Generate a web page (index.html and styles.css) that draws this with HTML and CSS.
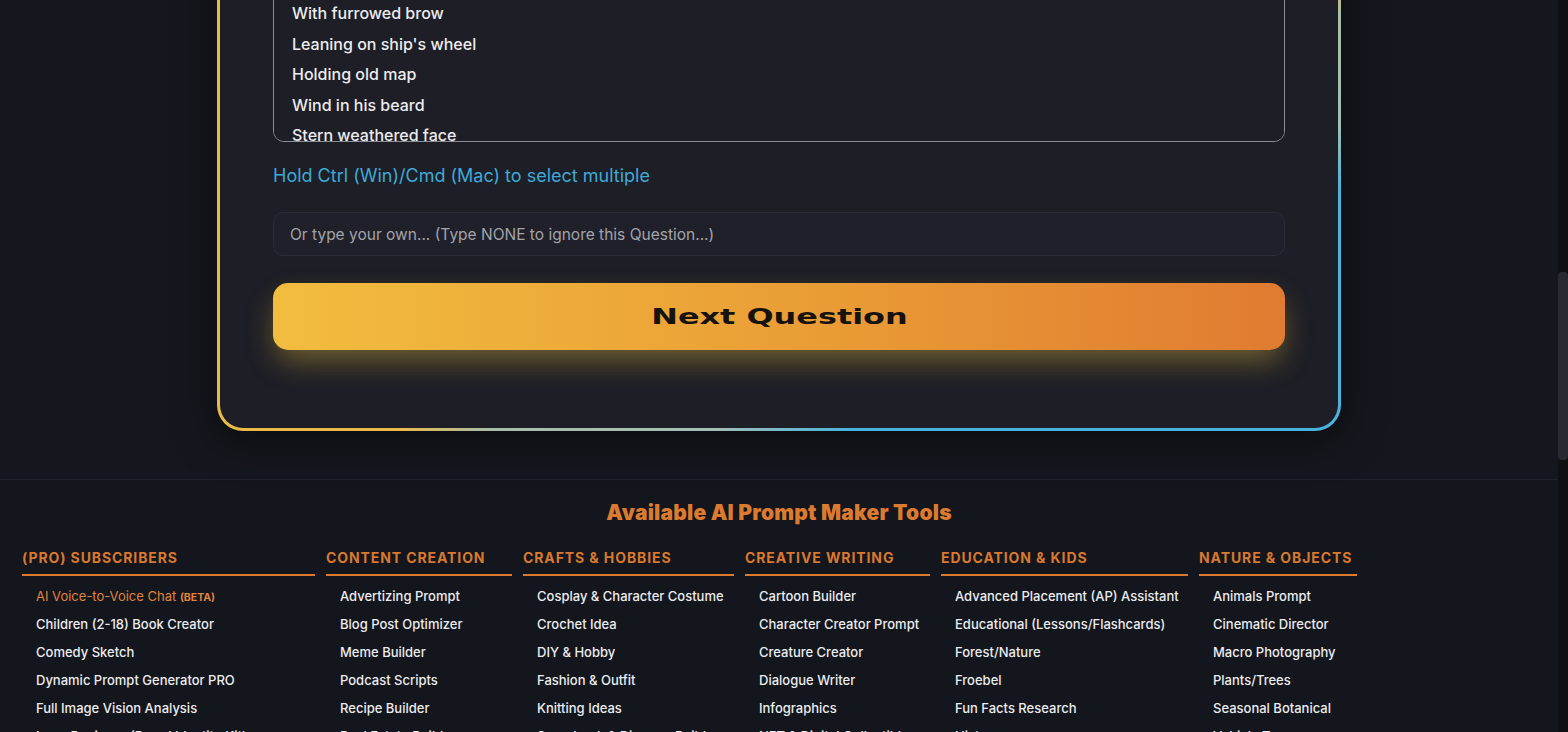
FILE: index.html
```html
<!DOCTYPE html>
<html lang="en">
  <head>
    <meta charset="UTF-8" />
    <meta name="viewport" content="width=device-width, initial-scale=1.0" />
    <title>AI Prompt Maker</title>
    <link rel="stylesheet" href="styles.css">
  </head>

  <body>
    <div class="viewport">
      <div class="quizWrap">
        <div class="quizCard">
          <div class="choiceList" role="listbox" aria-multiselectable="true">
            <div class="choice">Standing at the helm</div>
            <div class="choice">Looking out to sea</div>
            <div class="choice">With furrowed brow</div>
            <div class="choice">Leaning on ship's wheel</div>
            <div class="choice">Holding old map</div>
            <div class="choice">Wind in his beard</div>
            <div class="choice">Stern weathered face</div>
            <div class="choice">Smoking a long pipe</div>
            <div class="choice">Pointing at the horizon</div>
            <div class="choice">Arms crossed proudly</div>
            <div class="choice">Raising a spyglass</div>
            <div class="choice">Laughing heartily</div>
            <div class="choice">Soaked by sea spray</div>
          </div>

          <p class="hint">Hold Ctrl (Win)/Cmd (Mac) to select multiple</p>

          <input class="ownAnswer" type="text" placeholder="Or type your own... (Type NONE to ignore this Question...)" />

          <button class="nextButton"><span>Next Question</span></button>
        </div>
      </div>

      <div class="tools">
        <h2 class="toolsTitle">Available AI Prompt Maker Tools</h2>

        <div class="toolGrid">
          <div class="toolCol">
            <h3>(PRO) Subscribers</h3>
            <ul>
              <li class="featured">AI Voice-to-Voice Chat <b>(BETA)</b></li>
              <li>Children (2-18) Book Creator</li>
              <li>Comedy Sketch</li>
              <li>Dynamic Prompt Generator PRO</li>
              <li>Full Image Vision Analysis</li>
              <li>Logo Designer (Brand Identity Kit)</li>
            </ul>
          </div>

          <div class="toolCol">
            <h3>Content Creation</h3>
            <ul>
              <li>Advertizing Prompt</li>
              <li>Blog Post Optimizer</li>
              <li>Meme Builder</li>
              <li>Podcast Scripts</li>
              <li>Recipe Builder</li>
              <li>Real Estate Builder</li>
            </ul>
          </div>

          <div class="toolCol">
            <h3>Crafts &amp; Hobbies</h3>
            <ul>
              <li>Cosplay &amp; Character Costume</li>
              <li>Crochet Idea</li>
              <li>DIY &amp; Hobby</li>
              <li>Fashion &amp; Outfit</li>
              <li>Knitting Ideas</li>
              <li>Scrapbook &amp; Diorama Builder</li>
            </ul>
          </div>

          <div class="toolCol">
            <h3>Creative Writing</h3>
            <ul>
              <li>Cartoon Builder</li>
              <li>Character Creator Prompt</li>
              <li>Creature Creator</li>
              <li>Dialogue Writer</li>
              <li>Infographics</li>
              <li>NFT &amp; Digital Collectibles</li>
            </ul>
          </div>

          <div class="toolCol">
            <h3>Education &amp; Kids</h3>
            <ul>
              <li>Advanced Placement (AP) Assistant</li>
              <li>Educational (Lessons/Flashcards)</li>
              <li>Forest/Nature</li>
              <li>Froebel</li>
              <li>Fun Facts Research</li>
              <li>History</li>
            </ul>
          </div>

          <div class="toolCol">
            <h3>Nature &amp; Objects</h3>
            <ul>
              <li>Animals Prompt</li>
              <li>Cinematic Director</li>
              <li>Macro Photography</li>
              <li>Plants/Trees</li>
              <li>Seasonal Botanical</li>
              <li>Vehicle Types</li>
            </ul>
          </div>
        </div>
      </div>
    </div>

    <div class="scrollRail"><div class="scrollThumb"></div></div>
  </body>
</html>
```

FILE: styles.css
```css
body {
  margin: 0;
  height: 100vh;
  overflow: hidden;
  display: flex;
  background-color: #15171e;
  font-family: "Inter", "Noto Sans", sans-serif;
  color: #e6e6ea;
}

.viewport {
  flex: 1;
  overflow: hidden;
}

/* question card */

.quizWrap {
  display: flex;
  justify-content: center;
}

.quizCard {
  width: 1124px;
  box-sizing: border-box;
  margin-top: -120px;
  padding: 53px 53px 78px;
  border: 3px solid transparent;
  border-radius: 26px;
  background:
    linear-gradient(#1d1e26, #1d1e26) padding-box,
    linear-gradient(154deg, #ebbb48 58%, #a9bca8 62%, #a2bfb4 72%, #4ab3dd 78%) border-box;
  box-shadow: 0 8px 40px rgba(0, 0, 0, 0.55);
}

.choiceList {
  height: 206px;
  box-sizing: border-box;
  overflow-y: scroll;
  border: 1px solid #8c8e95;
  border-radius: 11px;
  background-color: #1d1e26;
}

.choiceList::-webkit-scrollbar {
  width: 11px;
}

.choiceList::-webkit-scrollbar-track {
  background: transparent;
}

.choiceList::-webkit-scrollbar-thumb {
  background-color: #272933;
  border-radius: 3px;
}

.choice {
  padding: 5px 18px;
  line-height: 20.5px;
  font-size: 16px;
  font-weight: 500;
  color: #ececef;
}

.hint {
  margin: 22px 0 0;
  font-size: 18px;
  line-height: 24px;
  color: #3eaad8;
}

.ownAnswer {
  display: block;
  width: 100%;
  height: 44px;
  box-sizing: border-box;
  margin-top: 24px;
  padding: 0 16px;
  border: 1px solid #2a2c35;
  border-radius: 10px;
  background-color: #1f2029;
  font-family: inherit;
  font-size: 15.5px;
  color: #e6e6ea;
  outline: none;
}

.ownAnswer::placeholder {
  color: #a3a4ab;
}

.nextButton {
  display: flex;
  align-items: center;
  justify-content: center;
  width: 100%;
  height: 67px;
  margin-top: 27px;
  border: none;
  border-radius: 15px;
  background: linear-gradient(90deg, #f1bd3f 0%, #ea9f36 50%, #e07b31 100%);
  box-shadow: 0 14px 30px -4px rgba(238, 190, 60, 0.42);
  cursor: pointer;
}

.nextButton span {
  display: inline-block;
  font-family: "DejaVu Sans", sans-serif;
  font-weight: bold;
  font-size: 22px;
  color: #15120f;
  transform: scaleX(1.45);
}

/* tools directory */

.tools {
  margin-top: 48px;
  padding: 19px 0 0 22px;
  border-top: 1px solid #1f222a;
  background-color: #13161c;
  height: 100%;
}

.toolsTitle {
  margin: 0 0 21px;
  padding-right: 22px;
  text-align: center;
  font-size: 21px;
  line-height: 28px;
  font-weight: 900;
  letter-spacing: 0.2px;
  color: #dc7b30;
}

.toolGrid {
  display: grid;
  grid-template-columns: 293px 186px 211px 185px 247px 158px;
  column-gap: 11px;
}

.toolCol h3 {
  margin: 0;
  padding-bottom: 6px;
  border-bottom: 2px solid #dc7b30;
  font-size: 14px;
  line-height: 20px;
  font-weight: 700;
  letter-spacing: 0.9px;
  text-transform: uppercase;
  color: #d8792f;
}

.toolCol ul {
  list-style: none;
  margin: 6px 0 0;
  padding: 0 0 0 14px;
}

.toolCol li {
  height: 28px;
  font-size: 13px;
  line-height: 28px;
  font-weight: 500;
  color: #ececef;
  white-space: nowrap;
}

.toolCol li.featured {
  color: #e0843b;
  font-weight: 400;
}

.toolCol li.featured b {
  font-size: 10.5px;
  line-height: 1;
  font-weight: 700;
}

/* page scrollbar */

.scrollRail {
  width: 10px;
  background-color: #0f1013;
}

.scrollThumb {
  margin-top: 272px;
  height: 188px;
  border-radius: 4px;
  background-color: #282a32;
}
```
